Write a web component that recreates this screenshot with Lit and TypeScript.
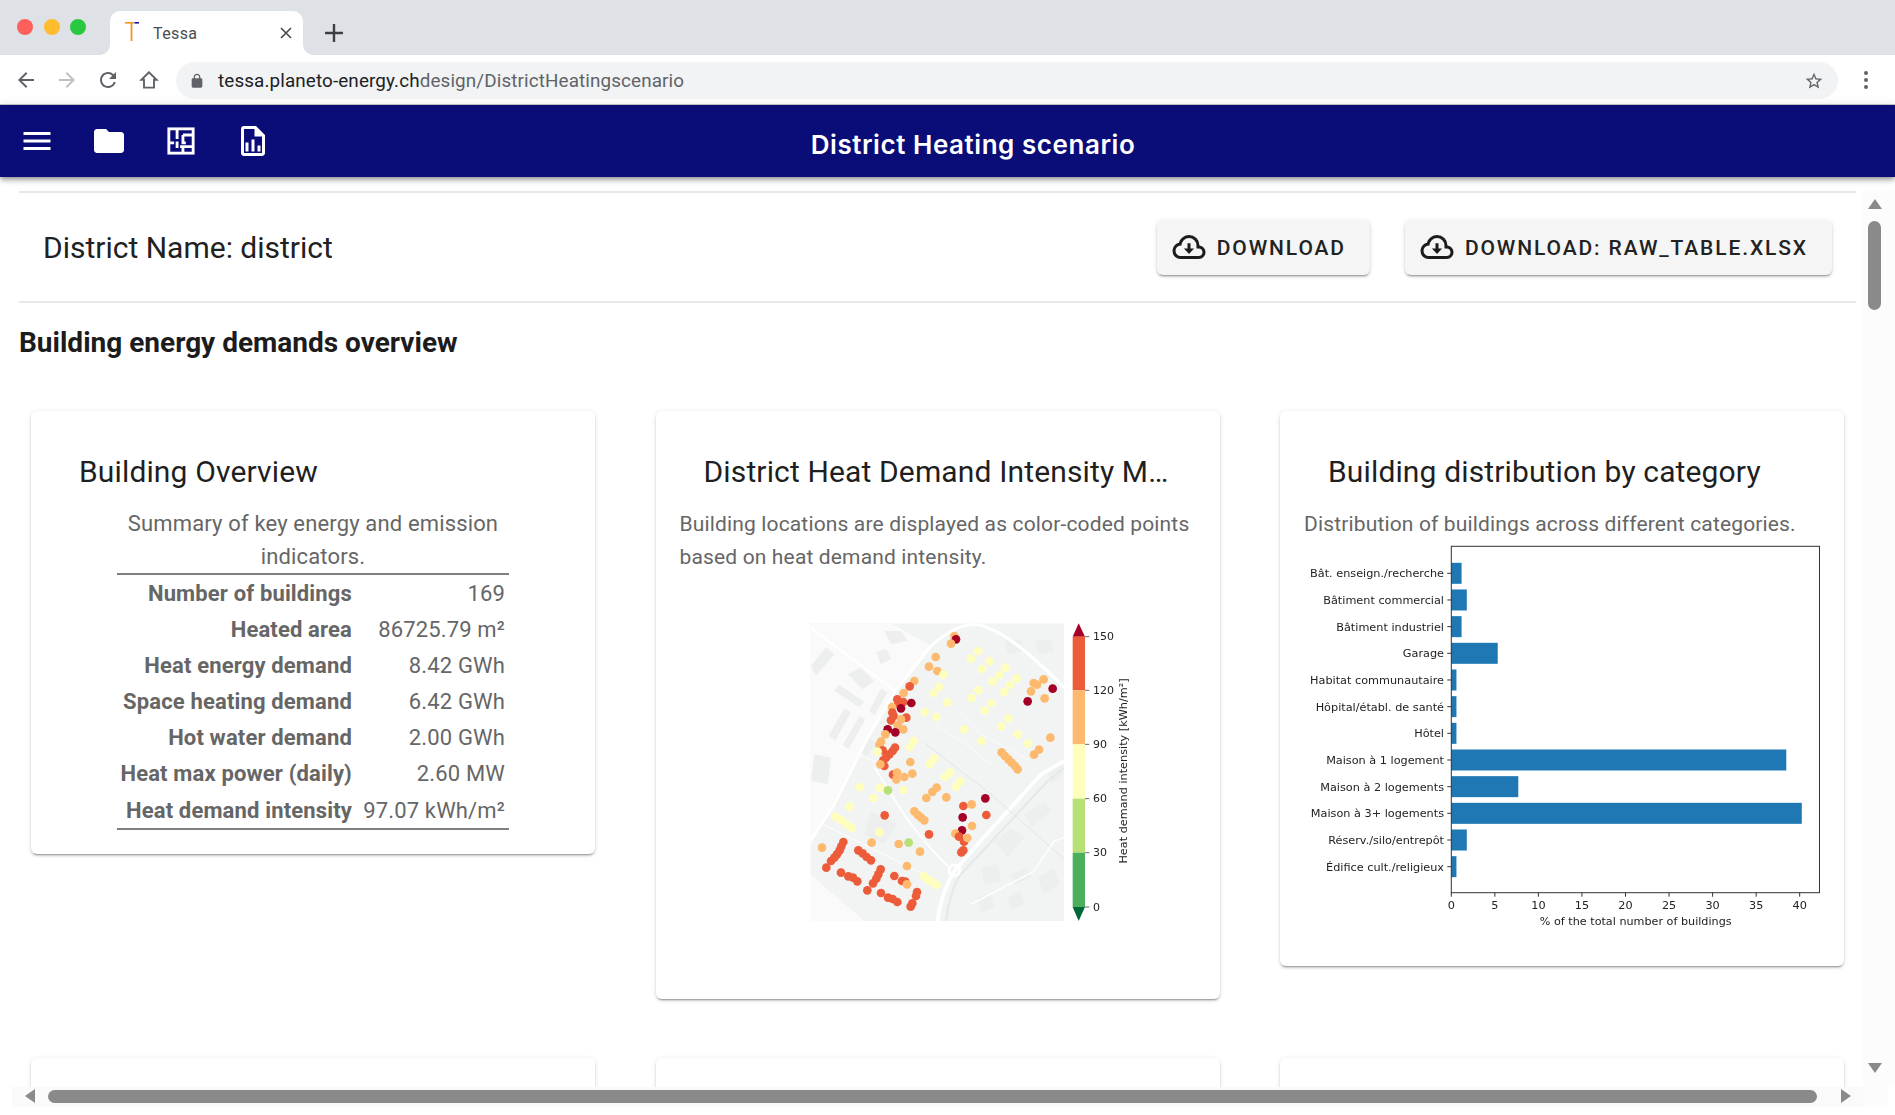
import { LitElement, html, css, svg } from "lit";
import { customElement } from "lit/decorators.js";

const C: Record<string, string> = { d: "#a50026", o: "#ec5c3a", l: "#fdb96e", p: "#feffbd", g: "#b7e075" };
const DOTS = "l490,75 d495,85 l480,98 p561,120 p540,143 l434,138 p595,151 l414,167 p573,174 l439,180 p644,170 p625,192 p457,191 p677,202 p605,212 p657,222 p640,243 l370,210 o356,226 l338,246 p444,228 p428,246 p562,238 p542,261 p601,276 p468,274 p581,298 l758,205 l728,216 l738,221 l720,241 d785,233 l761,262 d710,271 o319,265 o337,273 o322,278 d361,276 l303,288 d330,292 o304,305 o308,315 o300,328 p401,303 p436,318 o346,320 l330,325 l320,343 l337,355 d290,355 d313,364 l283,370 p652,322 p631,346 p520,355 p681,370 p571,390 p711,398 l778,380 l744,416 l729,431 p368,390 p357,408 l270,392 l265,402 o275,418 p260,422 o312,410 o305,420 o295,430 o285,440 o277,448 o280,465 l268,460 l358,453 l632,424 l642,435 l652,445 l662,455 l672,465 l680,475 p430,443 p416,459 p477,485 p462,498 p508,511 p495,527 o306,491 l318,485 l340,498 l364,488 l316,505 p206,528 p267,530 g291,538 p337,537 p247,561 l437,530 l424,543 l406,561 l466,559 d583,562 l542,580 o517,585 p176,587 l370,601 l381,612 l390,620 l400,628 o281,613 d515,619 o586,612 p133,617 p150,627 p167,640 p183,651 l543,645 d513,658 p265,664 o414,670 l493,668 o504,677 o519,692 l529,681 l242,695 l323,699 g353,695 l93,710 o157,693 o151,706 o146,718 o138,730 o130,740 o120,750 o202,718 o215,727 o227,738 o240,748 l387,722 o517,718 o511,724 l348,765 o106,770 o150,785 o172,796 o186,800 o199,811 o269,775 o262,790 o256,803 o246,817 o229,838 o310,795 o333,810 o343,812 l348,820 p398,795 p410,805 p423,813 p437,822 o378,843 o375,855 o270,846 o291,860 o305,864 o319,873 o364,877 o359,887"
  .split(" ").map((s) => ({ c: C[s[0]], x: +s.slice(1).split(",")[0], y: +s.slice(1).split(",")[1] }));

const BUILDINGS = [
  "130,239 145,222 220,272 205,289", "235,299 270,232 290,244 250,314", "113,374 160,292 180,304 133,389",
  "155,402 205,316 223,326 173,414", "60,164 105,109 130,129 75,194", "255,124 285,114 300,144 270,159",
  "170,190 210,170 250,210 215,235", "280,60 330,60 350,90 300,100", "210,420 235,380 255,395 225,440",
  "610,690 660,650 700,680 650,740", "570,770 620,760 630,810 580,820", "700,610 760,570 780,600 720,650",
  "740,800 790,770 805,820 760,850", "560,860 600,850 610,890 570,905", "650,860 690,840 700,880 660,900",
  "640,90 690,85 700,120 650,130", "730,90 780,85 790,120 745,130", "240,600 320,640 280,700 220,670",
  "770,480 810,450 820,490 780,520", "70,430 120,440 110,520 60,510", "660,790 710,770 720,800 670,820",
];
const ROADS = [
  { d: "M58 50 L313 240", w: 8, c: "#fff" },
  { d: "M58 690 L130 580 L230 380 L313 240 L420 105 C470 60 510 40 560 40 C640 60 720 130 820 230", w: 9, c: "#fff" },
  { d: "M820 450 L750 490 L560 700 L490 780 C460 830 445 880 440 930", w: 11, c: "#fff" },
  { d: "M820 470 L770 510 L580 715 L505 795 C480 840 470 890 465 930", w: 7, c: "#e6e9e9" },
  { d: "M400 395 L600 550 L820 745", w: 3, c: "#dfe5e6" },
  { d: "M250 470 C300 540 340 640 480 775", w: 5, c: "#fff" },
  { d: "M58 370 L260 455", w: 4, c: "#fafbfb" },
  { d: "M95 640 L400 790", w: 4, c: "#fafbfb" },
  { d: "M540 880 L730 780 L790 690 L820 680", w: 4, c: "#fff" },
  { d: "M430 340 L540 410 L610 470", w: 3, c: "#fafbfb" },
  { d: "M500 300 L570 370 L720 450", w: 3, c: "#fafbfb" },
];
const BAND = [
  { y: 77, h: 161, c: "#ec5c3a" }, { y: 238, h: 162, c: "#fdb96e" }, { y: 400, h: 163, c: "#feffbd" },
  { y: 563, h: 162, c: "#b7e075" }, { y: 725, h: 163, c: "#4bb05c" },
];
const TICKS = [{ y: 77, t: "150" }, { y: 238, t: "120" }, { y: 400, t: "90" }, { y: 563, t: "60" }, { y: 725, t: "30" }, { y: 888, t: "0" }];

const BARS: [string, number][] = [
  ["Bât. enseign./recherche", 1.18], ["Bâtiment commercial", 1.78], ["Bâtiment industriel", 1.18], ["Garage", 5.33],
  ["Habitat communautaire", 0.59], ["Hôpital/établ. de santé", 0.59], ["Hôtel", 0.59], ["Maison à 1 logement", 38.46],
  ["Maison à 2 logements", 7.69], ["Maison à 3+ logements", 40.24], ["Réserv./silo/entrepôt", 1.78], ["Édifice cult./religieux", 0.59],
];
const ROWS: [string, string][] = [
  ["Number of buildings", "169"], ["Heated area", "86725.79 m²"], ["Heat energy demand", "8.42 GWh"],
  ["Space heating demand", "6.42 GWh"], ["Hot water demand", "2.00 GWh"], ["Heat max power (daily)", "2.60 MW"],
  ["Heat demand intensity", "97.07 kWh/m²"],
];

const cloud = html`<svg class="cloud" viewBox="0 0 24 24"><path fill-rule="evenodd" d="M6.5 20Q4.22 20 2.61 18.43 1 16.85 1 14.58 1 12.63 2.17 11.1 3.35 9.57 5.25 9.15 5.88 6.85 7.75 5.43 9.63 4 12 4 14.93 4 16.96 6.04 19 8.07 19 11 20.73 11.2 21.86 12.5 23 13.78 23 15.5 23 17.38 21.69 18.69 20.38 20 18.5 20H6.5M6.5 18H18.5Q19.55 18 20.27 17.27 21 16.55 21 15.5 21 14.45 20.27 13.73 19.55 13 18.5 13H17V11Q17 8.93 15.54 7.46 14.08 6 12 6 9.93 6 8.46 7.46 7 8.93 7 11H6.5Q5.05 11 4.03 12.03 3 13.05 3 14.5 3 15.95 4.03 17 5.05 18 6.5 18Z"/><path d="M11 9.5h2V13h2.4L12 16.6 8.6 13H11z"/></svg>`;

@customElement("app-root")
export class AppRoot extends LitElement {
  static styles = css`
    :host { display: block; font-family: Roboto, "Liberation Sans", sans-serif; color: #212121; }
    * { box-sizing: border-box; }
    .page { height: 1115px; display: flex; flex-direction: column; overflow: hidden; background: #fff; }

    .tabstrip { height: 55px; flex: none; background: #dee1e6; display: flex; align-items: flex-end; padding-left: 17px; }
    .lights { display: flex; gap: 10.5px; align-self: flex-start; margin-top: 19px; margin-right: 24px; }
    .light { width: 16px; height: 16px; border-radius: 50%; }
    .red { background: #fd5f5b; } .yellow { background: #febc2e; } .green { background: #28c840; }
    .tab { position: relative; width: 193px; height: 44px; background: #fff; border-radius: 10px 10px 0 0; display: flex; align-items: center; padding-left: 15px; color: #4a4d51; font-size: 16px; letter-spacing: .4px; }
    .tab::before, .tab::after { content: ""; position: absolute; bottom: 0; width: 10px; height: 10px; }
    .tab::before { left: -10px; background: radial-gradient(circle at 0 0, transparent 9.5px, #fff 10px); }
    .tab::after { right: -10px; background: radial-gradient(circle at 100% 0, transparent 9.5px, #fff 10px); }
    .favicon { width: 14px; height: 19px; margin-right: 14px; margin-top: -3px; }
    .tab-title { flex: 1; }
    .close { width: 12px; height: 12px; margin-right: 11px; }
    .plus { width: 24px; height: 24px; margin-left: 19px; margin-bottom: 10px; }

    .toolbar { height: 50px; flex: none; display: flex; align-items: center; background: #fff; border-bottom: 1px solid #c9cbcd; padding-left: 14px; }
    .nav { width: 24px; height: 24px; margin-right: 17px; fill: #5f6368; flex: none; }
    .nav.off { fill: #bdc1c6; }
    .home { fill: none; stroke: #5f6368; stroke-width: 1.9; margin-right: 15px; }
    .omni { flex: none; width: 1662px; height: 37px; margin-top: 2px; border-radius: 19px; background: #f1f3f4; display: flex; align-items: center; padding: 0 14px 0 13px; font-size: 18.85px; color: #5f6368; }
    .lock { width: 16px; height: 16px; fill: #5f6368; margin-right: 13px; }
    .url { flex: 1; letter-spacing: .12px; }
    .url b { font-weight: 400; color: #202124; }
    .star { width: 20px; height: 20px; fill: #5f6368; }
    .kebab { width: 4px; margin-left: 26px; margin-top: 1px; display: flex; flex-direction: column; gap: 3px; }
    .kebab i { width: 4px; height: 4px; border-radius: 50%; background: #5f6368; }

    .appbar { height: 72px; flex: none; background: #0a0c78; display: flex; align-items: center; padding-left: 1px; position: relative; z-index: 2; box-shadow: 0 2px 4px -1px rgba(0,0,0,.3), 0 4px 5px 0 rgba(0,0,0,.16), 0 1px 10px 0 rgba(0,0,0,.12); }
    .appicon { width: 72px; height: 72px; display: flex; align-items: center; justify-content: center; flex: none; }
    .appicon svg { width: 36px; height: 36px; fill: #fff; }
    .apptitle { flex: 1; text-align: center; padding-right: 238px; padding-top: 6px; font-family: Inter, "Liberation Sans", sans-serif; font-weight: 600; font-size: 26px; color: #fff; letter-spacing: .55px; }

    .body { flex: 1; min-height: 0; display: grid; grid-template-columns: 1863px 32px; grid-template-rows: 910px 20px; }
    .viewport { overflow: hidden; padding: 14px 7px 0 19px; }
    .rule { height: 2px; background: #e8e8e8; }
    .bar { height: 108px; display: flex; align-items: center; padding: 0 24px 0 24px; }
    .name { flex: 1; font-size: 30px; margin: 0; font-weight: 400; }
    .btn { height: 55px; display: flex; align-items: center; background: #f5f5f5; border-radius: 6px; padding: 1px 24px 0 14px; margin-left: 35px; font-size: 21px; font-weight: 500; letter-spacing: 1.88px; color: #222; box-shadow: 0 3px 1px -2px rgba(0,0,0,.2), 0 2px 2px 0 rgba(0,0,0,.14), 0 1px 5px 0 rgba(0,0,0,.12); }
    .cloud { width: 36px; height: 36px; fill: #1c1c1c; margin-right: 10px; margin-top: -1px; }
    .heading { font-size: 28px; font-weight: 700; color: #1c1c1c; margin: 24px 0 0; line-height: 32px; height: 84px; }
    .cards { display: grid; grid-template-columns: repeat(3, 564px); column-gap: 60.5px; row-gap: 59px; margin-left: 12px; align-items: start; }
    .card { background: #fff; border-radius: 6px; padding: 24px; box-shadow: 0 3px 1px -2px rgba(0,0,0,.2), 0 2px 2px 0 rgba(0,0,0,.14), 0 1px 5px 0 rgba(0,0,0,.12); }
    .card.stub { height: 300px; }
    .title { font-size: 30px; line-height: 48px; height: 73px; padding: 13px 24px 0; letter-spacing: .14px; white-space: nowrap; overflow: hidden; text-overflow: ellipsis; color: #1f1f1f; }
    .desc { font-size: 21px; line-height: 33px; letter-spacing: .15px; color: #666; }
    .narrow { width: 392px; margin: 0 auto; }
    .center { text-align: center; font-size: 22px; margin-top: -1px; }
    table { width: 392px; border-collapse: collapse; border-top: 2px solid #808080; border-bottom: 2px solid #808080; font-size: 22px; color: #666; letter-spacing: .15px; table-layout: fixed; }
    td { height: 36px; padding: 0 4px 0 0; text-align: right; white-space: nowrap; }
    tr:first-child td { height: 37px; padding-top: 1px; }
    tr:last-child td { height: 38px; padding-top: 1px; }
    td.k { font-weight: 700; width: 239px; }
    .figure { display: block; width: 516px; height: 401px; filter: blur(.35px); }
    .figure text { font-family: "DejaVu Sans", sans-serif; fill: #222; }

    .vbar { background: #fcfcfc; display: flex; flex-direction: column; align-items: center; padding: 9px 9px 14px 0; margin-top: 13px; height: 897px; }
    .up { width: 0; height: 0; border: 7px solid transparent; border-top: 0; border-bottom: 10px solid #8a8a8a; }
    .down { width: 0; height: 0; border: 7px solid transparent; border-bottom: 0; border-top: 10px solid #8a8a8a; margin-top: auto; }
    .vthumb { width: 13px; height: 89px; border-radius: 7px; background: #8a8a8a; margin-top: 12px; }
    .hbar { background: #fafafa; margin-left: 12px; display: flex; align-items: center; padding: 0 0 2px 13px; }
    .left { width: 0; height: 0; border: 7px solid transparent; border-left: 0; border-right: 10px solid #8a8a8a; }
    .right { width: 0; height: 0; border: 7px solid transparent; border-right: 0; border-left: 10px solid #8a8a8a; margin-left: 24px; }
    .hthumb { width: 1769px; height: 13px; border-radius: 7px; background: #8a8a8a; margin-left: 13px; }
    .corner { background: #fcfcfc; margin-right: 7px; }
  `;

  private mapFigure() {
    return html`<svg class="figure" viewBox="0 0 516 401">
      <g transform="translate(111 37) scale(.33333)">
        <clipPath id="mapclip"><rect x="58" y="37" width="762" height="893"></rect></clipPath>
        <g clip-path="url(#mapclip)">
          <rect x="58" y="37" width="762" height="893" fill="#f1f4f3"></rect>
          <polygon points="58,37 300,37 420,105 313,240 230,380 130,580 58,690" fill="#fafafa"></polygon>
          <polygon points="58,790 220,930 58,930" fill="#fafafa"></polygon>
          ${BUILDINGS.map((p) => svg`<polygon points=${p} fill="#edefef"></polygon>`)}
          ${ROADS.map((r) => svg`<path d=${r.d} fill="none" stroke=${r.c} stroke-width=${r.w}></path>`)}
          <circle cx="490" cy="778" r="16" fill="none" stroke="#fff" stroke-width="8"></circle>
          ${DOTS.map((d) => svg`<circle cx=${d.x} cy=${d.y} r="13" fill=${d.c}></circle>`)}
        </g>
        <polygon points="845,77 863,37 882,77" fill="#a50026"></polygon>
        ${BAND.map((b) => svg`<rect x="845" y=${b.y} width="37" height=${b.h} fill=${b.c}></rect>`)}
        <polygon points="845,888 863,930 882,888" fill="#006837"></polygon>
        ${TICKS.map((t) => svg`<line x1="882" x2="895" y1=${t.y} y2=${t.y} stroke="#222" stroke-width="2"></line><text x="906" y=${t.y + 11} font-size="33">${t.t}</text>`)}
        <text transform="translate(1007 480) rotate(-90)" text-anchor="middle" font-size="33.8">Heat demand intensity [kWh/m²]</text>
      </g>
    </svg>`;
  }

  private chartFigure() {
    const L = 147.3, K = 8.71;
    return html`<svg class="figure" viewBox="0 0 516 401">
      ${BARS.map(([n, v], i) => {
        const y = 32.3 + i * 26.67;
        return svg`<rect x=${L} y=${y - 10.5} width=${v * K} height="21" fill="#1f77b4"></rect>
          <line x1=${L - 4} x2=${L} y1=${y} y2=${y} stroke="#333"></line>
          <text x="140" y=${y + 4} text-anchor="end" font-size="11.25">${n}</text>`;
      })}
      <rect x=${L} y="5.3" width="368.2" height="346.4" fill="none" stroke="#333" stroke-width="1"></rect>
      ${[0, 5, 10, 15, 20, 25, 30, 35, 40].map((v) => svg`
        <line x1=${L + v * K} x2=${L + v * K} y1="351.7" y2="355.7" stroke="#333"></line>
        <text x=${L + v * K} y="368" text-anchor="middle" font-size="11.25">${v}</text>`)}
      <text x="331.7" y="384" text-anchor="middle" font-size="11.2">% of the total number of buildings</text>
    </svg>`;
  }

  render() {
    return html`<div class="page">
      <div class="tabstrip">
        <div class="lights"><div class="light red"></div><div class="light yellow"></div><div class="light green"></div></div>
        <div class="tab">
          <svg class="favicon" viewBox="0 0 14 19"><rect x="0" y="0" width="9" height="1.6" fill="#f7941e"></rect><rect x="9.5" y="0" width="4.5" height="1.6" fill="#1414a0"></rect><rect x="5.6" y="1" width="1.8" height="18" fill="#f7941e"></rect></svg>
          <span class="tab-title">Tessa</span>
          <svg class="close" viewBox="0 0 12 12"><path d="M1 1l10 10M11 1L1 11" stroke="#45484c" stroke-width="1.6" fill="none"></path></svg>
        </div>
        <svg class="plus" viewBox="0 0 24 24"><path d="M12 3v18M3 12h18" stroke="#3c4043" stroke-width="2.4" fill="none"></path></svg>
      </div>

      <div class="toolbar">
        <svg class="nav" viewBox="0 0 24 24"><path d="M20 11H7.83l5.59-5.59L12 4l-8 8 8 8 1.41-1.41L7.83 13H20v-2z"></path></svg>
        <svg class="nav off" viewBox="0 0 24 24"><path d="M12 4l-1.41 1.41L16.17 11H4v2h12.17l-5.58 5.59L12 20l8-8z"></path></svg>
        <svg class="nav" viewBox="0 0 24 24"><path d="M17.65 6.35A7.958 7.958 0 0 0 12 4c-4.42 0-7.99 3.58-7.99 8s3.57 8 7.99 8c3.73 0 6.84-2.55 7.73-6h-2.08A5.99 5.99 0 0 1 12 18c-3.31 0-6-2.69-6-6s2.69-6 6-6c1.66 0 3.14.69 4.22 1.78L13 11h7V4l-2.35 2.35z"></path></svg>
        <svg class="nav home" viewBox="0 0 24 24"><path d="M12 4.3 4.4 11.8H7V19.6H17V11.8H19.6Z"></path></svg>
        <div class="omni">
          <svg class="lock" viewBox="0 0 24 24"><path d="M18 8h-1V6c0-2.76-2.24-5-5-5S7 3.24 7 6v2H6c-1.1 0-2 .9-2 2v10c0 1.1.9 2 2 2h12c1.1 0 2-.9 2-2V10c0-1.1-.9-2-2-2zM9 6c0-1.66 1.34-3 3-3s3 1.34 3 3v2H9V6z"></path></svg>
          <span class="url"><b>tessa.planeto-energy.ch</b>design/DistrictHeatingscenario</span>
          <svg class="star" viewBox="0 0 24 24"><path d="M22 9.24l-7.19-.62L12 2 9.19 8.63 2 9.24l5.46 4.73L5.82 21 12 17.27 18.18 21l-1.63-7.03L22 9.24zM12 15.4l-3.76 2.27 1-4.28-3.32-2.88 4.38-.38L12 6.1l1.71 4.04 4.38.38-3.32 2.88 1 4.28L12 15.4z"></path></svg>
        </div>
        <div class="kebab"><i></i><i></i><i></i></div>
      </div>

      <div class="appbar">
        <div class="appicon"><svg viewBox="0 0 24 24"><path d="M3 18h18v-2H3v2zm0-5h18v-2H3v2zm0-7v2h18V6H3z"></path></svg></div>
        <div class="appicon"><svg viewBox="0 0 24 24"><path d="M10 4H4c-1.1 0-1.99.9-1.99 2L2 18c0 1.1.9 2 2 2h16c1.1 0 2-.9 2-2V8c0-1.1-.9-2-2-2h-8l-2-2z"></path></svg></div>
        <div class="appicon"><svg viewBox="0 0 24 24"><g fill="none" stroke="#fff" stroke-width="1.9"><rect x="3.9" y="3.9" width="16.2" height="16.2"></rect><path d="M9.4 3.7V10.6M3.7 13.2H7.4M9.4 12.4V16.6M13.3 8H20.3M13.3 8V13.2H15.2M11.4 15.7H20.3M13.3 15.7V20.3"></path></g></svg></div>
        <div class="appicon"><svg viewBox="0 0 24 24"><path d="M14 2H6C4.89 2 4 2.89 4 4V20C4 21.11 4.89 22 6 22H18C19.11 22 20 21.11 20 20V8L14 2M18 20H6V4H13V9H18V20M9 13V19H7V13H9M15 15V19H17V15H15M11 11V19H13V11H11Z"></path></svg></div>
        <div class="apptitle">District Heating scenario</div>
      </div>

      <div class="body">
        <div class="viewport">
          <div class="rule"></div>
          <div class="bar">
            <h1 class="name">District Name: district</h1>
            <div class="btn">${cloud}DOWNLOAD</div>
            <div class="btn">${cloud}DOWNLOAD: RAW_TABLE.XLSX</div>
          </div>
          <div class="rule"></div>
          <h2 class="heading">Building energy demands overview</h2>
          <div class="cards">
            <div class="card">
              <div class="title">Building Overview</div>
              <div class="narrow">
                <div class="desc center">Summary of key energy and emission indicators.</div>
                <table><tbody>
                  ${ROWS.map(([k, v]) => html`<tr><td class="k">${k}</td><td>${v}</td></tr>`)}
                </tbody></table>
              </div>
            </div>
            <div class="card">
              <div class="title">District Heat Demand Intensity Map</div>
              <div class="desc">Building locations are displayed as color-coded points based on heat demand intensity.</div>
              ${this.mapFigure()}
            </div>
            <div class="card">
              <div class="title">Building distribution by category</div>
              <div class="desc">Distribution of buildings across different categories.</div>
              ${this.chartFigure()}
            </div>
            <div class="card stub"></div>
            <div class="card stub"></div>
            <div class="card stub"></div>
          </div>
        </div>
        <div class="vbar"><div class="up"></div><div class="vthumb"></div><div class="down"></div></div>
        <div class="hbar"><div class="left"></div><div class="hthumb"></div><div class="right"></div></div>
        <div class="corner"></div>
      </div>
    </div>`;
  }
}
